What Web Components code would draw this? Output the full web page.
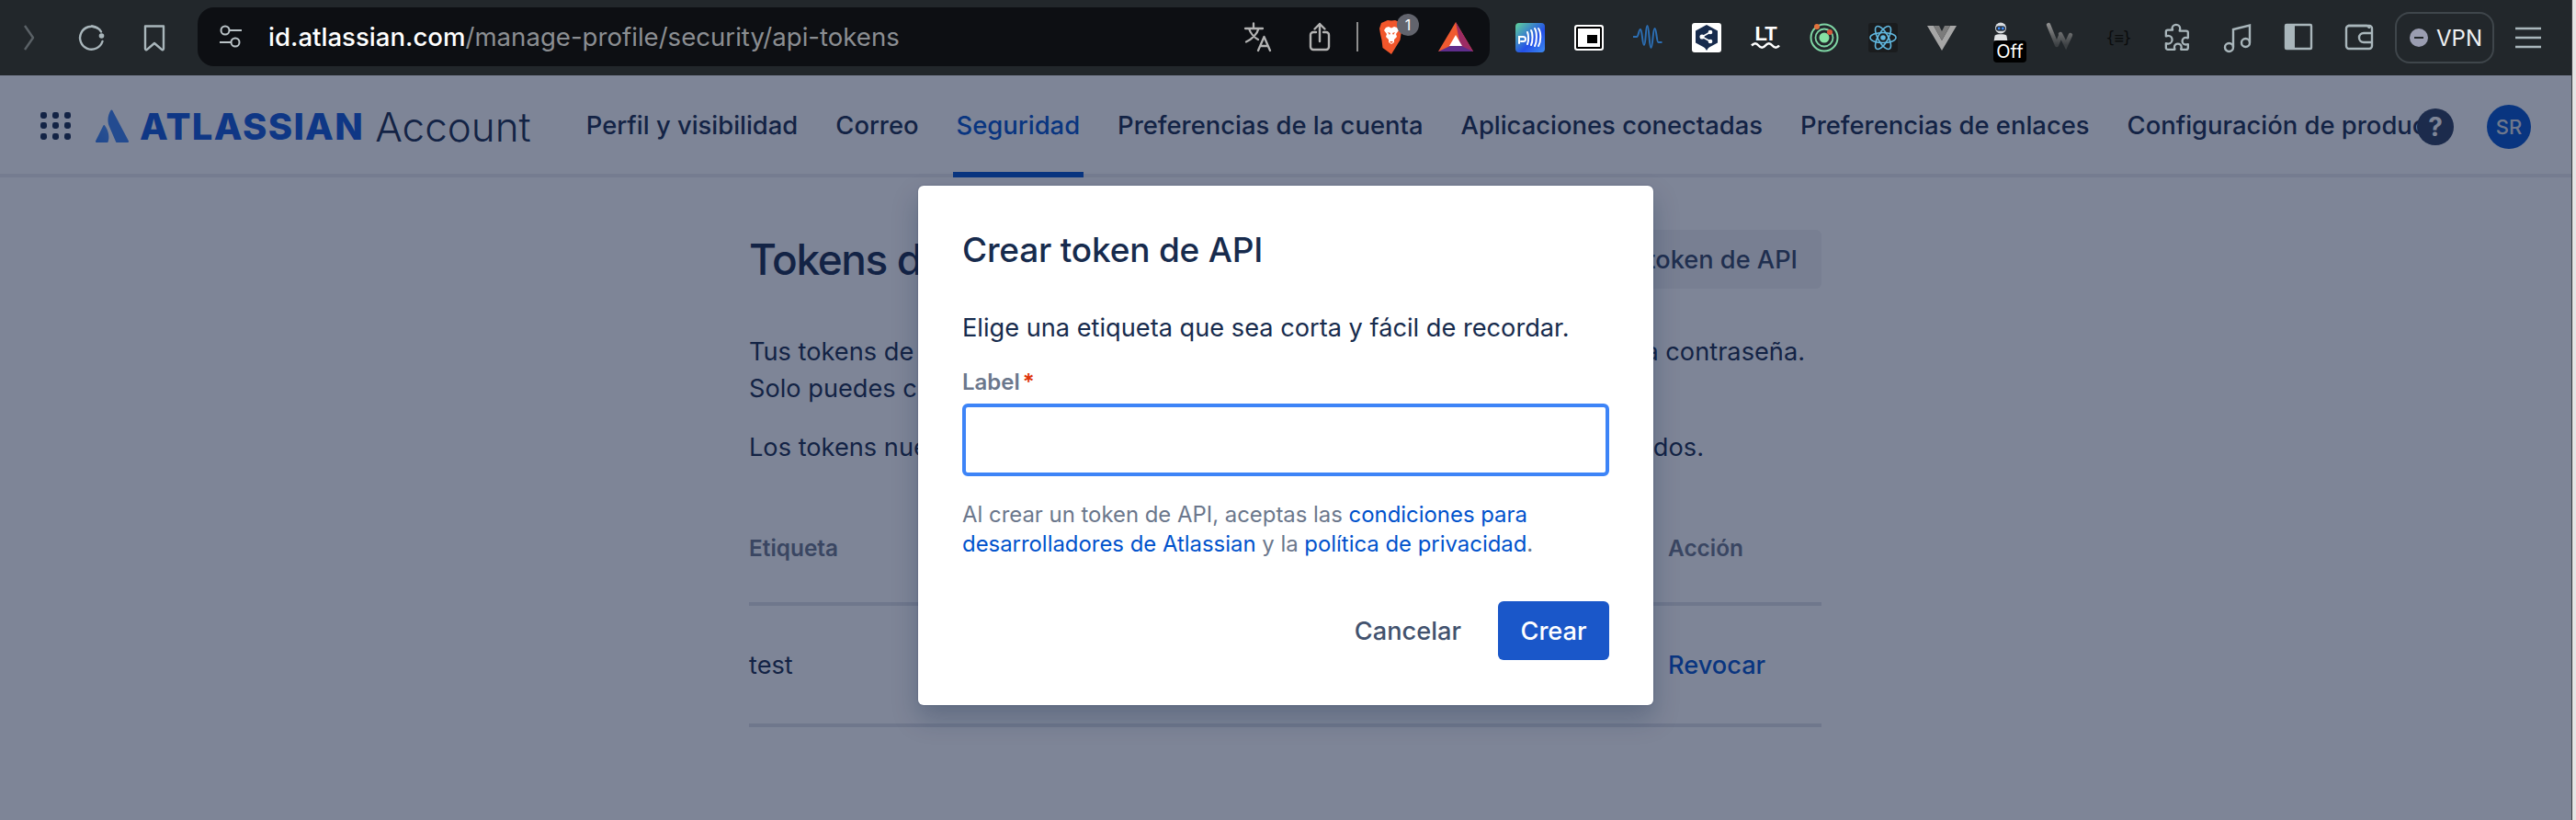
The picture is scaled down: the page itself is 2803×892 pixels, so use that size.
<!DOCTYPE html>
<html lang="es">
<head>
<meta charset="utf-8">
<title>Tokens de API</title>
<style>
  html, body { margin: 0; height: 100%; overflow: hidden; background: #fff; }
  body { font-family: Inter, "Liberation Sans", sans-serif; }
</style>
</head>
<body>
<app-window>
  <browser-toolbar slot="toolbar">
    <tool-icon name="forward" size="32"></tool-icon>
    <tool-icon name="reload" size="32"></tool-icon>
    <tool-icon name="bookmark" size="32"></tool-icon>
    <address-bar host-name="id.atlassian.com" path="/manage-profile/security/api-tokens"></address-bar>
    <ext-strip>
      <tool-icon name="pay" size="32"></tool-icon>
      <tool-icon name="pip" size="32"></tool-icon>
      <tool-icon name="wave" size="32"></tool-icon>
      <tool-icon name="hexshare" size="32"></tool-icon>
      <tool-icon name="lt" size="32"></tool-icon>
      <tool-icon name="orbit" size="32"></tool-icon>
      <tool-icon name="react" size="32"></tool-icon>
      <tool-icon name="vue" size="32"></tool-icon>
      <robot-ext></robot-ext>
      <tool-icon name="wlogo" size="32"></tool-icon>
      <json-ext></json-ext>
      <tool-icon name="puzzle" size="32"></tool-icon>
      <tool-icon name="music" size="32"></tool-icon>
      <tool-icon name="sidebar" size="32"></tool-icon>
      <tool-icon name="wallet" size="32"></tool-icon>
    </ext-strip>
    <vpn-pill></vpn-pill>
    <tool-icon name="menu" size="32"></tool-icon>
  </browser-toolbar>

  <account-header>
    <nav-item>Perfil y visibilidad</nav-item>
    <nav-item>Correo</nav-item>
    <nav-item active>Seguridad</nav-item>
    <nav-item>Preferencias de la cuenta</nav-item>
    <nav-item>Aplicaciones conectadas</nav-item>
    <nav-item>Preferencias de enlaces</nav-item>
    <nav-item>Configuración de producto</nav-item>
  </account-header>

  <tokens-page></tokens-page>

  <modal-blanket slot="overlay">
    <token-dialog></token-dialog>
  </modal-blanket>
</app-window>

<script>
const ICONS = {
  forward: '<path d="M11 3l9 13-9 13" fill="none" stroke="#5a6166" stroke-width="2.4" stroke-linejoin="round"/>',
  reload: '<path d="M22 5.500A12.500 12.500 0 1 0 27.500 20" fill="none" stroke="#a9b6bb" stroke-width="2.400" stroke-linecap="round"/><path d="M16 3.500c4 .5 8 2.500 10 6" fill="none" stroke="#a9b6bb" stroke-width="2.400" stroke-linecap="round"/><circle cx="26.500" cy="14" r="2.800" fill="#a9b6bb"/>',
  bookmark: '<path d="M6 3.500h20v24.500a1.200 1.200 0 0 1-2 .9L16 22l-8 6.900a1.200 1.200 0 0 1-2-.9z" fill="none" stroke="#a9b6bb" stroke-width="2.400" stroke-linejoin="round"/>',
  tune: '<g fill="none" stroke="#b9c2c6" stroke-width="2"><circle cx="7" cy="7" r="4.500"/><path d="M12 7h13"/><circle cx="18" cy="20" r="4.500"/><path d="M1 20h12"/></g>',
  translate: '<g fill="none" stroke="#b3b3b3" stroke-width="2.300" stroke-linecap="round" stroke-linejoin="round"><path d="M1 7h19M10 1.500V7M15.500 7C14 13 8 19 2 21.500M5 7c1.500 5 6 10 10 12"/><path d="M15 31l6.500-15L28 31M17.200 26h8.600"/></g>',
  share: '<g fill="none" stroke="#b3b3b3" stroke-width="2.400" stroke-linecap="round" stroke-linejoin="round"><path d="M8 11H5a3 3 0 0 0-3 3v13a3 3 0 0 0 3 3h14a3 3 0 0 0 3-3V14a3 3 0 0 0-3-3h-3"/><path d="M12 21V2M6.500 7.500L12 2l5.500 5.500"/></g>',
  brave: '<path d="M3 4l7-3 4 .5 4-.5 7 3 1 6-1.500 6-1 6.500L14 38l-9.500-7-1-8.500L2 16 1 10z" fill="#f1562b"/><path d="M8 9l3-1 3 1.500L17 8l3 1 2 3-3 4 1 3-3 3v3l-3 2-3-2v-3l-3-3 1-3-3-4z" fill="#fff"/><path d="M10 14l3 1-1 2zM18 14l-3 1 1 2zM12 24h4l-2 2z" fill="#f1562b"/>',
  bat: '<path d="M19 0L0 32h38z" fill="#f05a30"/><path d="M19 0l19 32H25z" fill="#9c2b64"/><path d="M0 32l13-6h12l13 6z" fill="#5f2d8c"/><path d="M19 14l7 12H12z" fill="#fff"/>',
  pay: '<defs><linearGradient id="payg" x1="0" y1="0" x2="1" y2="1"><stop offset="0" stop-color="#5fd39a"/><stop offset=".6" stop-color="#2450e8"/><stop offset="1" stop-color="#3d8cf0"/></linearGradient></defs><rect width="32" height="32" rx="4" fill="url(#payg)"/><g fill="none" stroke="#fff" stroke-width="2" stroke-linecap="round"><path d="M4 22v-7h4.500a2.500 2.500 0 0 1 0 5H6"/><path d="M13 23c1.500-3 1.500-10 0-13M17 24c2-4 2-13 0-16M21 25c2.500-5 2.500-15 0-19M25 25c3-5 3-15 0-19"/></g>',
  pip: '<rect x="0" y="2" width="32" height="28" rx="3" fill="#fff"/><rect x="2" y="4" width="28" height="24" rx="1.500" fill="#000"/><rect x="4" y="6" width="24" height="20" fill="#fff"/><rect x="14" y="13" width="11" height="9" fill="#000"/>',
  wave: '<path d="M0 14h4c2 0 2-8 4-8s2 17 4 17 1.500-21 3.500-21 2 24 4 24 2-21 4-21 2 15 4 15h4" transform="translate(0,1)" fill="none" stroke="#2c6fb5" stroke-width="2"/>',
  hexshare: '<rect width="32" height="32" rx="3" fill="#fff"/><path d="M16 2l12 6.500v13L16 28 4 21.500v-13z" fill="#172b4d"/><path d="M16 24h-4l4 6 4-6z" fill="#172b4d"/><g stroke="#fff" stroke-width="1.500" fill="#fff"><path d="M11 15l9-5M11 15l9 5" fill="none"/><circle cx="11" cy="15" r="1.800"/><circle cx="20" cy="10" r="1.600"/><circle cx="20" cy="20" r="1.600"/></g>',
  lt: '<text x="16" y="19" text-anchor="middle" font-family="Liberation Sans" font-weight="700" font-size="22" letter-spacing="-1" fill="#fff">LT</text><path d="M1 24.500c3-3 5-3 7.500 0s5 3 7.500 0 5-3 7.500 0 5 3 7.500 0" fill="none" stroke="#fff" stroke-width="2.600"/>',
  orbit: '<circle cx="16" cy="16" r="14.500" fill="none" stroke="#7fd6a5" stroke-width="2"/><circle cx="16" cy="16" r="9.500" fill="none" stroke="#7fd6a5" stroke-width="1.800"/><circle cx="16" cy="16" r="5.500" fill="#86e2a4"/><circle cx="8" cy="4" r="3" fill="#e0713c"/><circle cx="22" cy="10" r="3" fill="#d4593c"/>',
  react: '<rect width="32" height="32" rx="3" fill="#1a1c1e"/><g fill="none" stroke="#61b8e0" stroke-width="1.600"><ellipse cx="16" cy="16" rx="14" ry="5.500"/><ellipse cx="16" cy="16" rx="14" ry="5.500" transform="rotate(60 16 16)"/><ellipse cx="16" cy="16" rx="14" ry="5.500" transform="rotate(120 16 16)"/></g><circle cx="16" cy="16" r="2.800" fill="#61b8e0"/>',
  vue: '<path d="M0 3h7l9 16 9-16h7L16 30z" fill="#a6a6a6"/><path d="M7 3h6l3 6 3-6h6l-9 16z" fill="#7b7b7b"/>',
  wlogo: '<defs><linearGradient id="wg" x1="0" y1="0" x2="0" y2="1"><stop offset="0" stop-color="#8c8c8c"/><stop offset="1" stop-color="#3c4043"/></linearGradient></defs><path d="M4 2l9 22M13 24l4-10M17 12l6 12 5-11" fill="none" stroke="url(#wg)" stroke-width="4.500" stroke-linecap="round"/>',
  puzzle: '<path d="M11 6.500a4.500 4.500 0 1 1 9 0c0 1-.5 1.500-.5 2.500h7.500a2 2 0 0 1 2 2v6c-1 0-1.500-.5-2.500-.5a4 4 0 0 0 0 8c1 0 1.500-.5 2.500-.5v4a2 2 0 0 1-2 2h-6c0-1 .5-1.500.5-2.500a4 4 0 0 0-8 0c0 1 .5 1.500.5 2.500H6a2 2 0 0 1-2-2v-5c1 0 1.500.5 2.500.5a4.500 4.500 0 0 0 0-9c-1 0-1.500.5-2.500.5v-5a2 2 0 0 1 2-2h5.500c0-1-.5-1.500-.5-2.500z" transform="scale(.96)" fill="none" stroke="#a9b6bb" stroke-width="2.400" stroke-linejoin="round"/>',
  music: '<g fill="none" stroke="#a9b6bb" stroke-width="2.400"><circle cx="6.500" cy="26.500" r="4.500"/><circle cx="24.500" cy="21.500" r="4.500"/><path d="M11 26V7l18-4.500V21"/></g>',
  sidebar: '<path d="M3 2h26a1 1 0 0 1 1 1v24a1 1 0 0 1-1 1H3a1 1 0 0 1-1-1V3a1 1 0 0 1 1-1z" fill="none" stroke="#a9b6bb" stroke-width="2.400"/><rect x="2" y="2" width="10" height="26" fill="#a9b6bb"/>',
  wallet: '<g fill="none" stroke="#a9b6bb" stroke-width="2.400" stroke-linejoin="round"><path d="M4 3h20a3 3 0 0 1 3 3"/><rect x="2" y="3" width="28" height="25" rx="3"/><path d="M30 11H21a5 5 0 0 0 0 10h9"/></g>',
  menu: '<g stroke="#a9b6bb" stroke-width="2.400"><path d="M2 6h28M2 16h28M2 26h28"/></g>',
  grid: '<g fill="#172b4d">' + [3, 14, 26].map(y => [3, 16, 29].map(x => `<rect x="${x - 3}" y="${y - 3}" width="7" height="7" rx="2.400"/>`).join('')).join('') + '</g>',
  atlas: '<defs><linearGradient id="ag" x1="0" y1="1" x2="1" y2="0"><stop offset="0" stop-color="#2f78ea"/><stop offset="1" stop-color="#4a90f5"/></linearGradient></defs><path d="M10 17.500c-.5-.7-1.300-.6-1.700.2L0 34.500c-.3.700.2 1.500 1 1.500h11.500c.4 0 .8-.2 1-.6 2-4.300.8-12.500-3.500-17.900z" fill="url(#ag)"/><path d="M16.500 1C12.500 7.500 12.800 14.500 15.500 20l6.700 15.400c.2.400.6.600 1 .6H35c.8 0 1.300-.800 1-1.500L18.300 1c-.4-.7-1.400-.7-1.800 0z" fill="#3a82f0"/>'
}

/**
 * Small svg icon, size is the drawn box in pixels.
 */
class ToolIcon extends HTMLElement {
  connectedCallback () {
    const size = this.getAttribute('size') || 32
    const height = this.getAttribute('height') || size
    const box = this.getAttribute('box') || `0 0 ${size} ${height}`
    this.attachShadow({ mode: 'open' }).innerHTML = `
      <style>
        :host { display: flex; align-items: center; justify-content: center; flex: none; }
        svg { display: block; overflow: visible; }
      </style>
      <svg width="${size}" height="${height}" viewBox="${box}">${ICONS[this.getAttribute('name')]}</svg>`
  }
}
customElements.define('tool-icon', ToolIcon)

class AppWindow extends HTMLElement {
  constructor () {
    super()
    this.attachShadow({ mode: 'open' }).innerHTML = `
      <style>
        :host { display: block; position: relative; width: 2803px; height: 892px; overflow: hidden;
          color: #172b4d; font-family: Inter, "Liberation Sans", sans-serif; }
        #edge { position: absolute; top: 0; right: 0; bottom: 0; width: 5px; background: #e4e4e4; border-left: 1px solid #3a3f42; box-sizing: border-box; z-index: 5; }
        #content { position: relative; width: 2798px; height: 810px; }
      </style>
      <slot name="toolbar"></slot>
      <div id="content"><slot></slot><slot name="overlay"></slot></div>
      <div id="edge"></div>`
  }
}
customElements.define('app-window', AppWindow)

class BrowserToolbar extends HTMLElement {
  constructor () {
    super()
    this.attachShadow({ mode: 'open' }).innerHTML = `
      <style>
        :host { display: flex; align-items: center; box-sizing: border-box; height: 82px; width: 2798px;
          padding-left: 16px; background: #22272b; }
        ::slotted(tool-icon:nth-child(1)) { margin-right: 36px; }
        ::slotted(tool-icon:nth-child(2)) { margin-right: 36px; }
        ::slotted(tool-icon:nth-child(3)) { margin-right: 31px; }
      </style>
      <slot></slot>`
  }
}
customElements.define('browser-toolbar', BrowserToolbar)

class AddressBar extends HTMLElement {
  connectedCallback () {
    this.attachShadow({ mode: 'open' }).innerHTML = `
      <style>
        :host { display: flex; align-items: center; box-sizing: border-box; flex: none; width: 1406px; height: 64px;
          margin-top: -2px; padding-left: 23px; border-radius: 18px; background: #0d0f13; }
        #url { margin-left: 28px; font-size: 27.600px; white-space: nowrap; color: #8b8e92; }
        #url b { font-weight: 500; color: #fff; }
        #right { display: flex; align-items: center; margin-left: auto; }
        #sep { width: 2px; height: 32px; margin: 0 22px 0 28px; background: #8e8e8e; }
        #brave { position: relative; }
        #badge { position: absolute; left: 20px; top: -6px; width: 24px; height: 24px; border-radius: 12px; background: #62646d;
          color: #fff; font-size: 16px; line-height: 24px; text-align: center; }
      </style>
      <tool-icon name="tune" size="26" height="28"></tool-icon>
      <span id="url"><b>${this.getAttribute('host-name')}</b>${this.getAttribute('path')}</span>
      <div id="right">
        <tool-icon name="translate" size="30" height="32" style="margin-right:40px"></tool-icon>
        <tool-icon name="share" size="24" height="32"></tool-icon>
        <div id="sep"></div>
        <div id="brave"><tool-icon name="brave" size="28" height="38" box="0 0 28 38"></tool-icon><span id="badge">1</span></div>
        <tool-icon name="bat" size="38" height="32" style="margin:0 18px 0 37px"></tool-icon>
      </div>`
  }
}
customElements.define('address-bar', AddressBar)

class ExtStrip extends HTMLElement {
  constructor () {
    super()
    this.attachShadow({ mode: 'open' }).innerHTML = `
      <style>
        :host { display: flex; align-items: center; gap: 32px; margin-left: 28px; }
        ::slotted(:nth-child(n+13)) { margin-left: 2px; }
      </style>
      <slot></slot>`
  }
}
customElements.define('ext-strip', ExtStrip)

class RobotExt extends HTMLElement {
  constructor () {
    super()
    this.attachShadow({ mode: 'open' }).innerHTML = `
      <style>
        :host { display: block; position: relative; width: 32px; height: 32px; flex: none; }
        svg { position: absolute; left: 6px; top: -1px; }
        #off { position: absolute; left: 8px; top: 19px; width: 36px; height: 24px; border-radius: 4px; background: #000;
          color: #fff; font-size: 20px; line-height: 24px; text-align: center; }
      </style>
      <svg width="20" height="22" viewBox="0 0 20 24">
        <circle cx="10" cy="7" r="6.500" fill="#d9dcdf"/><rect x="4.500" y="4.500" width="11" height="6" rx="3" fill="#26303c"/>
        <circle cx="8" cy="7.500" r="1.500" fill="#3a8bff"/><circle cx="12.500" cy="7.500" r="1.500" fill="#3a8bff"/>
        <path d="M2 22l1-6c2-2 12-2 14 0l1 6z" fill="#e2e4e6"/>
      </svg>
      <span id="off">Off</span>`
  }
}
customElements.define('robot-ext', RobotExt)

class JsonExt extends HTMLElement {
  constructor () {
    super()
    this.attachShadow({ mode: 'open' }).innerHTML = `
      <style>
        :host { display: flex; align-items: center; justify-content: center; width: 32px; height: 32px; flex: none;
          font-family: "DejaVu Sans Mono", monospace; font-size: 17px; color: #0b0d0e; white-space: nowrap; letter-spacing: -1px; }
      </style>{≡}`
  }
}
customElements.define('json-ext', JsonExt)

class VpnPill extends HTMLElement {
  constructor () {
    super()
    this.attachShadow({ mode: 'open' }).innerHTML = `
      <style>
        :host { display: flex; align-items: center; gap: 9px; box-sizing: border-box; width: 108px; height: 56px; margin-left: 23px; margin-right: 21px;
          padding-left: 14px; border: 2px solid #3f464b; border-radius: 16px; color: #eef0f2; font-size: 24px; flex: none; }
        i { position: relative; display: block; width: 20px; height: 20px; border-radius: 50%; background: #9a9db1; }
        i::after { content: ""; position: absolute; left: 5px; right: 5px; top: 9px; height: 2px; background: #22272b; }
      </style>
      <i></i>VPN`
  }
}
customElements.define('vpn-pill', VpnPill)

class AccountHeader extends HTMLElement {
  constructor () {
    super()
    this.attachShadow({ mode: 'open' }).innerHTML = `
      <style>
        :host { display: flex; align-items: stretch; box-sizing: border-box; height: 111px; padding: 0 44px; box-shadow: inset 0 -4px 0 #ebecf0; background: #fff; }
        #brand { display: flex; align-items: center; flex: none; }
        #brand b { margin-left: 12px; font-size: 40px; font-weight: 800; letter-spacing: 1.300px; color: #0f55d8; }
        #brand span { margin-left: 12px; font-size: 44px; font-weight: 300; color: #172b4d; white-space: nowrap; }
        nav { display: flex; align-items: stretch; gap: 33px; flex: 1; min-width: 0; margin: 0 -12px 0 56px; overflow: hidden; }
        #side { position: relative; display: flex; align-items: center; gap: 36px; flex: none; }
        #help { display: flex; align-items: center; justify-content: center; width: 40px; height: 40px; border-radius: 50%;
          background: #2a3b5c; color: #fff; font-size: 28px; font-weight: 700; }
        #avatar { display: flex; align-items: center; justify-content: center; width: 48px; height: 48px; border-radius: 50%;
          background: #0052cc; color: #dfe1e6; font-size: 22px; font-weight: 500; }
      </style>
      <div id="brand">
        <tool-icon name="grid" size="32"></tool-icon>
        <tool-icon name="atlas" size="36" style="margin-left:28px;margin-top:-2px"></tool-icon>
        <b>ATLASSIAN</b><span>Account</span>
      </div>
      <nav><slot></slot></nav>
      <div id="side"><div id="help">?</div><div id="avatar">SR</div></div>`
  }
}
customElements.define('account-header', AccountHeader)

class NavItem extends HTMLElement {
  constructor () {
    super()
    this.attachShadow({ mode: 'open' }).innerHTML = `
      <style>
        :host { display: flex; align-items: center; flex: none; padding: 3px 4px 0; font-size: 27.400px; font-weight: 500; color: #172b4d; white-space: nowrap; border-bottom: 6px solid transparent; }
        :host([active]) { color: #0052cc; border-bottom-color: #0052cc; }
      </style>
      <slot></slot>`
  }
}
customElements.define('nav-item', NavItem)

class TokensPage extends HTMLElement {
  constructor () {
    super()
    this.attachShadow({ mode: 'open' }).innerHTML = `
      <style>
        :host { display: block; box-sizing: border-box; width: 1167px; margin-left: 815px; padding-top: 57px; font-size: 27.200px; color: #172b4d; }
        header, .line { display: flex; justify-content: space-between; }
        header { align-items: center; height: 64px; }
        h1 { margin: 0; font-size: 46px; font-weight: 500; letter-spacing: -1.400px; }
        #action { display: flex; align-items: center; box-sizing: border-box; height: 64px; padding: 0 26px; border-radius: 6px; background: #f1f2f4; font-weight: 500; color: #344563; }
        .line { height: 40px; line-height: 40px; }
        #para { margin-top: 49px; }
        #para .gap { margin-top: 24px; }
        #table { margin-top: 74px; }
        .row { display: grid; grid-template-columns: 1fr 167px; }
        #head { height: 74px; font-size: 24.400px; font-weight: 600; color: #6b778c; border-bottom: 4px solid #dfe1e6; }
        #body { align-items: center; height: 128px; border-bottom: 4px solid #dfe1e6; }
        #revoke { color: #0052cc; font-weight: 500; }
      </style>
      <header><h1>Tokens d</h1><div id="action">token de API</div></header>
      <div id="para">
        <div class="line"><span>Tus tokens de</span><span style="margin-right:18px">a contraseña.</span></div>
        <div class="line"><span>Solo puedes c</span></div>
        <div class="line gap"><span>Los tokens nue</span><span style="margin-right:128px">dos.</span></div>
      </div>
      <div id="table">
        <div class="row" id="head"><span>Etiqueta</span><span>Acción</span></div>
        <div class="row" id="body"><span>test</span><span id="revoke">Revocar</span></div>
      </div>`
  }
}
customElements.define('tokens-page', TokensPage)

class ModalBlanket extends HTMLElement {
  constructor () {
    super()
    this.attachShadow({ mode: 'open' }).innerHTML = `
      <style>
        :host { position: absolute; inset: 0; display: flex; justify-content: center; align-items: flex-start; box-sizing: border-box;
          padding-top: 120px; background: rgba(16, 30, 62, .54); }
      </style>
      <slot></slot>`
  }
}
customElements.define('modal-blanket', ModalBlanket)

class TokenDialog extends HTMLElement {
  constructor () {
    super()
    this.attachShadow({ mode: 'open' }).innerHTML = `
      <style>
        :host { display: block; box-sizing: border-box; width: 800px; height: 565px; padding: 48px 48px 0; border-radius: 6px; background: #fff;
          box-shadow: 0 0 2px rgba(9, 30, 66, .3), 0 14px 28px rgba(9, 30, 66, .25); color: #172b4d; font-size: 27.200px; }
        h2 { margin: 0; font-size: 37px; line-height: 44px; font-weight: 500; letter-spacing: -.2px; }
        p { margin: 0; }
        #intro { margin-top: 43px; line-height: 40px; color: #172b4d; }
        label { display: block; margin-top: 25px; font-size: 24px; line-height: 28px; font-weight: 600; color: #6b778c; }
        label i { font-style: normal; margin-left: -3px; color: #de350b; }
        #field { display: block; box-sizing: border-box; width: 100%; height: 79px; margin-top: 9px; border: 4px solid #3d84f7; border-radius: 6px; background: #fff; outline: none; }
        #terms { margin-top: 26px; font-size: 23.900px; line-height: 32px; color: #6b778c; white-space: nowrap; }
        a { color: #0052cc; text-decoration: none; }
        #actions { display: flex; justify-content: flex-end; align-items: center; gap: 40px; margin-top: 46px; }
        button { font: inherit; font-weight: 500; border: 0; background: none; padding: 0; color: #42526e; }
        #create { width: 121px; height: 64px; border-radius: 6px; background: #1a57c9; color: #fff; }
      </style>
      <h2>Crear token de API</h2>
      <p id="intro">Elige una etiqueta que sea corta y fácil de recordar.</p>
      <label>Label <i>*</i></label>
      <input id="field" type="text">
      <p id="terms">Al crear un token de API, aceptas las <a href="#">condiciones para</a><br><a href="#">desarrolladores de Atlassian</a> y la <a href="#">política de privacidad</a>.</p>
      <div id="actions"><button>Cancelar</button><button id="create">Crear</button></div>`
  }
}
customElements.define('token-dialog', TokenDialog)
</script>
</body>
</html>
